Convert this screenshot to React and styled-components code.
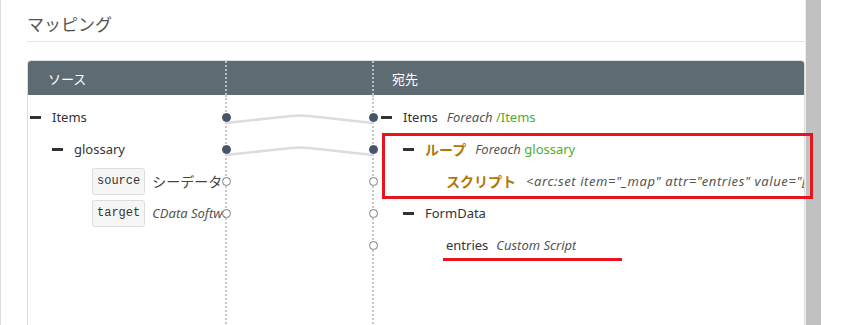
import React from "react";
import styled, { createGlobalStyle } from "styled-components";

const GlobalStyle = createGlobalStyle`
  html, body {
    margin: 0;
    padding: 0;
    background: #fff;
    overflow: hidden;
  }
  body {
    font-family: "Noto Sans", "Noto Sans CJK JP", sans-serif;
    color: #333;
  }
`;

const RED = "#e8141d";

const Page = styled.div`
  position: relative;
  display: flex;
  width: 845px;
  height: 325px;
  overflow: hidden;
`;

const Main = styled.div`
  flex: none;
  width: 778px;
  border-left: 1px solid #ddd;
  border-right: 1px solid #eee;
  padding-left: 26px;
`;

const Scrollbar = styled.div`
  flex: none;
  width: 15px;
  height: 100%;
  background: #c1c1c1;
`;

const Title = styled.h2`
  margin: 0;
  padding: 12px 0 5px;
  font: 400 17px/24px "Noto Sans CJK JP", "Noto Sans", sans-serif;
  color: #555;
  border-bottom: 1px solid #e4e4e4;
`;

const Table = styled.div`
  margin-top: 18px;
  border: 1px solid #ddd;
  border-radius: 4px 4px 0 0;
  overflow: hidden;
`;

const Grid = styled.div`
  display: grid;
  grid-template-columns: 199px 147px 1fr;
`;

const HeadCell = styled.div`
  box-sizing: border-box;
  height: 34px;
  padding-left: ${(p) => p.$pad || 0}px;
  display: flex;
  align-items: center;
  background: #5f6b73;
  color: #fff;
  font: 400 13px "Noto Sans CJK JP", sans-serif;
  border-right: ${(p) => (p.$last ? "none" : "2px dotted #b9bec2")};
`;

const Column = styled.div`
  box-sizing: border-box;
  height: 240px;
  padding-top: 6px;
  min-width: 0;
  border-right: ${(p) => (p.$last ? "none" : "2px dotted #c8c8c8")};
`;

const Row = styled.div`
  position: relative;
  box-sizing: border-box;
  height: 32px;
  display: flex;
  align-items: center;
  padding-left: ${(p) => p.$indent}px;
  white-space: nowrap;
  min-width: 0;
`;

const Minus = styled.span`
  flex: none;
  width: 11px;
  height: 3px;
  background: #333;
  margin-right: 11px;
`;

const Name = styled.span`
  font-size: 13px;
  color: #333;
`;

const Note = styled.span`
  font-size: 13px;
  font-style: italic;
  color: #555;
  margin-left: ${(p) => p.$gap ?? 9}px;
  overflow: hidden;
  min-width: 0;
`;

const Path = styled.span`
  color: #4dae1f;
  font-style: normal;
`;

const Label = styled.span`
  font: 700 14px "Noto Sans CJK JP", "Noto Sans", sans-serif;
  color: #b3760f;
`;

const Script = styled.span`
  font-size: 13px;
  font-style: italic;
  letter-spacing: 0.6px;
  color: #555;
  margin-left: 10px;
  overflow: hidden;
  min-width: 0;
`;

const Badge = styled.span`
  flex: none;
  box-sizing: border-box;
  height: 27px;
  padding: 0 4px;
  display: flex;
  align-items: center;
  font: 400 12px "Liberation Mono", monospace;
  color: #333;
  background: #f6f6f6;
  border: 1px solid #ddd;
  border-radius: 3px;
`;

const Value = styled.span`
  margin-left: 7px;
  overflow: hidden;
  min-width: 0;
  font-size: ${(p) => (p.$italic ? 13 : 14)}px;
  font-style: ${(p) => (p.$italic ? "italic" : "normal")};
  font-family: "Noto Sans", "Noto Sans CJK JP", sans-serif;
  color: ${(p) => (p.$italic ? "#555" : "#444")};
`;

const Dot = styled.span`
  position: absolute;
  top: 50%;
  ${(p) => (p.$side === "left" ? "left: -5px;" : "right: -6px;")}
  box-sizing: border-box;
  width: 9px;
  height: 9px;
  margin-top: -4.5px;
  border-radius: 50%;
  background: ${(p) => (p.$filled ? "#45546a" : "#fff")};
  border: 1.5px solid ${(p) => (p.$filled ? "#45546a" : "#7a7a7a")};
`;

const Links = styled.svg`
  display: block;
  overflow: visible;
`;

const HighlightBox = styled.div`
  position: absolute;
  left: 382px;
  top: 133px;
  width: 431px;
  height: 66px;
  box-sizing: border-box;
  border: 3px solid ${RED};
  pointer-events: none;
`;

const Underline = styled.div`
  position: absolute;
  left: 443px;
  top: 258px;
  width: 179px;
  height: 3px;
  background: ${RED};
`;

const links = [22, 54];

export default function App() {
  return (
    <>
      <GlobalStyle />
      <Page>
        <Main>
          <Title>マッピング</Title>
          <Table>
            <Grid>
              <HeadCell $pad={20}>ソース</HeadCell>
              <HeadCell />
              <HeadCell $pad={18} $last>
                宛先
              </HeadCell>
            </Grid>
            <Grid>
              <Column>
                <Row $indent={2}>
                  <Minus />
                  <Name>Items</Name>
                  <Dot $filled />
                </Row>
                <Row $indent={24}>
                  <Minus />
                  <Name>glossary</Name>
                  <Dot $filled />
                </Row>
                <Row $indent={64}>
                  <Badge>source</Badge>
                  <Value>シーデータ</Value>
                  <Dot />
                </Row>
                <Row $indent={64}>
                  <Badge>target</Badge>
                  <Value $italic>CData Software</Value>
                  <Dot />
                </Row>
              </Column>

              <Column>
                <Links width="145" height="80">
                  {links.map((y) => (
                    <path
                      key={y}
                      d={`M-1 ${y} L64 ${y - 7} Q73 ${y - 8} 82 ${y - 7} L146 ${y}`}
                      fill="none"
                      stroke="#dcdcdc"
                      strokeWidth="2.5"
                    />
                  ))}
                </Links>
              </Column>

              <Column $last>
                <Row $indent={7}>
                  <Minus />
                  <Name>Items</Name>
                  <Note>
                    Foreach <Path>/Items</Path>
                  </Note>
                  <Dot $filled $side="left" />
                </Row>
                <Row $indent={29}>
                  <Minus />
                  <Label>ループ</Label>
                  <Note>
                    Foreach <Path>glossary</Path>
                  </Note>
                  <Dot $filled $side="left" />
                </Row>
                <Row $indent={72}>
                  <Label>スクリプト</Label>
                  <Script>
                    {'<arc:set item="_map" attr="entries" value="[_map.glossary]" />'}
                  </Script>
                  <Dot $side="left" />
                </Row>
                <Row $indent={29}>
                  <Minus />
                  <Name>FormData</Name>
                  <Dot $side="left" />
                </Row>
                <Row $indent={72}>
                  <Name>entries</Name>
                  <Note $gap={8}>Custom Script</Note>
                  <Dot $side="left" />
                </Row>
              </Column>
            </Grid>
          </Table>
        </Main>
        <Scrollbar />
        <HighlightBox />
        <Underline />
      </Page>
    </>
  );
}
